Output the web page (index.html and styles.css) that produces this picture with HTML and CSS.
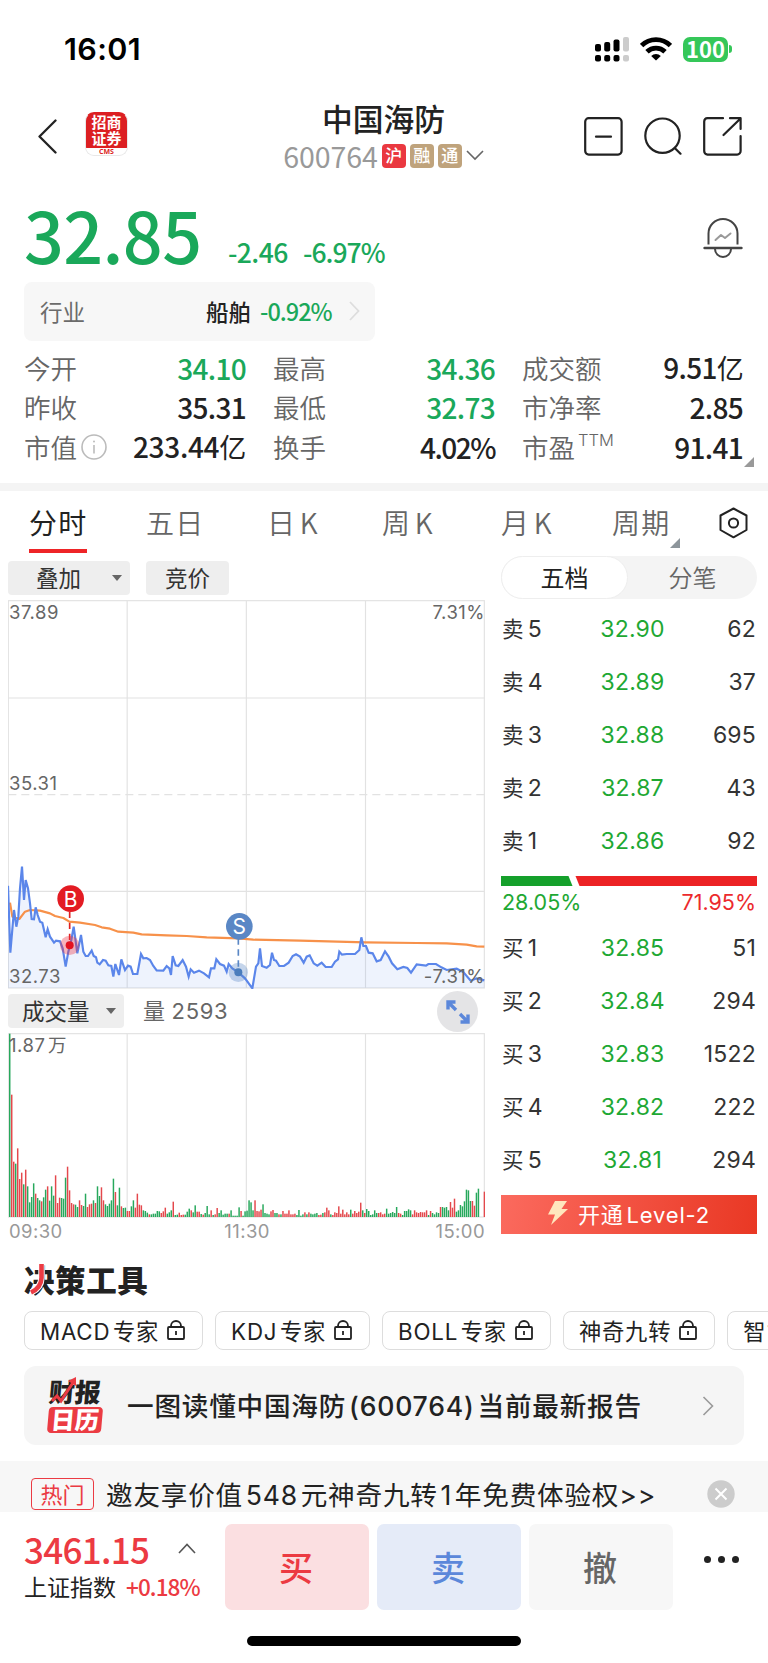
FILE: index.html
```
<!DOCTYPE html>
<html lang="zh-CN">
<head>
  <meta charset="UTF-8" />
  <meta name="viewport" content="width=device-width, initial-scale=1.0"/>
  <title>中国海防 600764</title>
  <link rel="stylesheet" href="styles.css">
</head>
<body>

  <div class="status-bar">
    <span class="clock">16:01</span>
    <div class="status-icons">
      <svg class="signal" width="34" height="25" viewBox="0 0 34 25">
        <g fill="#000">
          <rect x="0" y="7" width="6" height="7.5" rx="2"/>
          <rect x="9.2" y="5" width="6" height="9.5" rx="2"/>
          <rect x="18.5" y="2.5" width="6" height="12" rx="2"/>
          <rect x="0" y="18" width="6" height="6.5" rx="2"/>
          <rect x="9.2" y="18" width="6" height="6.5" rx="2"/>
          <rect x="18.5" y="18" width="6" height="6.5" rx="2"/>
        </g>
        <g fill="#ccc">
          <rect x="28" y="0" width="6" height="14.5" rx="2"/>
          <rect x="28" y="18" width="6" height="6.5" rx="2"/>
        </g>
      </svg>
      <svg class="wifi" width="32" height="24" viewBox="0 0 32 24" fill="none" stroke="#000" stroke-width="4.8">
        <path d="M1.6 8.6 A20.4 20.4 0 0 1 30.4 8.6"/>
        <path d="M7 14.8 A12.8 12.8 0 0 1 25 14.8"/>
        <path d="M16 23.5 L11.2 18.9 A6.8 6.8 0 0 1 20.8 18.9 Z" fill="#000" stroke="none"/>
      </svg>
      <span class="battery">100</span>
      <span class="battery-tip"></span>
    </div>
  </div>

  <header class="header">
    <svg class="back" width="19" height="35" viewBox="0 0 19 35" fill="none" stroke="#222" stroke-width="2.3" stroke-linecap="round" stroke-linejoin="round">
      <path d="M17.5 1.5 L1.5 17.5 L17.5 33.5"/>
    </svg>
    <div class="broker">
      <span>招商</span>
      <span>证券</span>
      <small>CMS</small>
    </div>
    <div class="stock">
      <h1>中国海防</h1>
      <div class="code-row">
        <span class="code">600764</span>
        <span class="badge badge-red">沪</span>
        <span class="badge">融</span>
        <span class="badge">通</span>
        <svg width="18" height="11" viewBox="0 0 18 11" fill="none" stroke="#666" stroke-width="1.6"><path d="M1 1 L9 9 L17 1"/></svg>
      </div>
    </div>
    <div class="tools">
      <svg width="39" height="39" viewBox="0 0 39 39" fill="none" stroke="#222" stroke-width="2.2" stroke-linecap="round">
        <rect x="1.2" y="1.2" width="36.4" height="36.4" rx="3.5"/><path d="M12 19.7 H27"/>
      </svg>
      <svg width="38" height="39" viewBox="0 0 38 39" fill="none" stroke="#222" stroke-width="2.2" stroke-linecap="round">
        <circle cx="18.5" cy="18.7" r="17.2"/><path d="M31 31.2 L36.5 36.7"/>
      </svg>
      <svg width="39" height="39" viewBox="0 0 39 39" fill="none" stroke="#222" stroke-width="2.2" stroke-linecap="round" stroke-linejoin="round">
        <path d="M20 1.2 H4.5 A3.5 3.5 0 0 0 1.2 4.5 V34 A3.5 3.5 0 0 0 4.5 37.6 H34 A3.5 3.5 0 0 0 37.6 34 V19"/>
        <path d="M27 1.2 H37.6 V12 M37 2 L20.5 18"/>
      </svg>
    </div>
  </header>

  <section class="quote">
    <div class="price-row">
      <span class="price">32.85</span>
      <span class="change">-2.46</span>
      <span class="percent">-6.97%</span>
      <svg class="bell" width="40" height="40" viewBox="0 0 40 40" fill="none" stroke="#444" stroke-width="2">
        <path d="M5.5 26.5 V15.5 A14.5 14.5 0 0 1 34.5 15.5 V26.5"/>
        <path d="M1.5 30 H38.5" stroke-width="2.4" stroke-linecap="round"/>
        <path d="M12 31 A8 8 0 0 0 28 31"/>
        <path d="M12.5 22 L18 17 L22 20 L27.5 15.5" stroke="#999" stroke-linecap="round" stroke-linejoin="round"/>
      </svg>
    </div>

    <div class="industry">
      <span class="industry-label">行业</span>
      <span class="industry-name">船舶</span>
      <span class="industry-pct">-0.92%</span>
      <svg width="11" height="20" viewBox="0 0 11 20" fill="none" stroke="#ddd" stroke-width="1.8"><path d="M1 1 L9.5 10 L1 19"/></svg>
    </div>

    <div class="stats">
      <div class="stat"><span>今开</span><b class="down">34.10</b></div>
      <div class="stat"><span>最高</span><b class="down">34.36</b></div>
      <div class="stat"><span>成交额</span><b>9.51<i>亿</i></b></div>
      <div class="stat"><span>昨收</span><b>35.31</b></div>
      <div class="stat"><span>最低</span><b class="down">32.73</b></div>
      <div class="stat"><span>市净率</span><b>2.85</b></div>
      <div class="stat">
        <span>市值</span>
        <svg class="info" width="26" height="26" viewBox="0 0 26 26" fill="none" stroke="#bbb" stroke-width="1.6">
          <circle cx="13" cy="13" r="12"/><path d="M13 11 V19.5"/><circle cx="13" cy="7.5" r="1" fill="#bbb" stroke="none"/>
        </svg>
        <b class="wide">233.44<i>亿</i></b>
      </div>
      <div class="stat"><span>换手</span><b class="narrow">4.02%</b></div>
      <div class="stat"><span>市盈<sup>TTM</sup></span><b>91.41</b></div>
      <span class="corner"></span>
    </div>
  </section>

  <nav class="tabs">
    <span class="tab active">分时</span>
    <span class="tab">五日</span>
    <span class="tab">日 K</span>
    <span class="tab">周 K</span>
    <span class="tab">月 K</span>
    <span class="tab more">周期</span>
    <svg width="29" height="32" viewBox="0 0 29 32" fill="none" stroke="#222" stroke-width="2" stroke-linejoin="round">
      <path d="M14.5 1.5 L27.5 8.5 V23 L14.5 30.3 L1.5 23 V8.5 Z"/><circle cx="14.5" cy="16" r="4.6"/>
    </svg>
  </nav>

  <main class="market">
    <div class="charts">
      <div class="chart-buttons">
        <span class="gray-button overlay">叠加<i class="arrow"></i></span>
        <span class="gray-button auction">竞价</span>
      </div>

      <div class="price-chart">
        <svg id="priceSvg" width="477" height="389" viewBox="24 -660 1431 1167">
          <g stroke="#e2e2e2" stroke-width="3.5" fill="none">
            <rect x="25" y="-658" width="1428" height="1162"/>
            <path d="M381.5 -658 V504 M739 -658 V504 M1096.5 -658 V504 M25 -366 H1453 M25 214 H1453"/>
            <path d="M25 -76 H1453" stroke-dasharray="24 15"/>
          </g>
          <polygon id="area" fill="#5b86ea" fill-opacity=".1"/>
          <polyline id="average" fill="none" stroke="#f7914a" stroke-width="6.5" stroke-linejoin="round"/>
          <polyline id="line" fill="none" stroke="#5b86ea" stroke-width="6.5"/>
          <g stroke-width="5" stroke-dasharray="19 14">
            <path d="M209 275 V375" stroke="#e02020"/>
            <path d="M715 355 V457" stroke="#5a87c5"/>
          </g>
          <circle cx="209" cy="376" r="29" fill="#ec2b3c" fill-opacity=".35"/>
          <circle cx="209" cy="376" r="12" fill="#e3121f"/>
          <circle cx="715" cy="457" r="29" fill="#5a87c5" fill-opacity=".35"/>
          <circle cx="715" cy="457" r="12" fill="#4a7dbc"/>
          <circle cx="212" cy="236" r="40" fill="#e31b23"/>
          <circle cx="718" cy="319" r="40" fill="#5a87c5"/>
          <text x="212" y="260" class="mark">B</text>
          <text x="718" y="342" class="mark">S</text>
        </svg>
        <span class="axis top left">37.89</span>
        <span class="axis top right">7.31%</span>
        <span class="axis middle left">35.31</span>
        <span class="axis bottom left">32.73</span>
        <span class="axis bottom right">-7.31%</span>
      </div>

      <div class="volume-head">
        <span class="gray-button volume-button">成交量<i class="arrow"></i></span>
        <span class="volume-now">量 2593</span>
        <span class="expand">
          <svg width="24" height="24" viewBox="0 0 24 24" fill="none" stroke="#5b87da" stroke-width="3.4">
            <path d="M9.5 2 H2 V9.5 M2 2 L10 10 M14 14 L22 22 M22 14.5 V22 H14.5"/>
          </svg>
        </span>
      </div>

      <div class="volume-chart">
        <svg width="477" height="185" viewBox="24 39 1431 555">
          <g stroke="#e2e2e2" stroke-width="3.5" fill="none">
            <rect x="25" y="41" width="1428" height="550"/>
            <path d="M381.5 41 V591 M739 41 V591 M1096.5 41 V591"/>
          </g>
          <g id="bars"></g>
        </svg>
        <span class="axis top left">1.87 万</span>
      </div>

      <div class="times">
        <span>09:30</span><span>11:30</span><span>15:00</span>
      </div>
    </div>

    <aside class="book">
      <div class="switch">
        <span class="on">五档</span>
        <span>分笔</span>
      </div>
      <div id="sell"></div>
      <svg class="ratio" width="256" height="10" viewBox="0 0 256 10">
        <path d="M0 0 H67.5 L71.5 10 H0 Z" fill="#15a02b"/>
        <path d="M74.5 0 H256 V10 H78.5 Z" fill="#ec2224"/>
      </svg>
      <div class="ratio-text"><span>28.05%</span><span>71.95%</span></div>
      <div id="buy"></div>
      <div class="level2">
        <svg width="20" height="24" viewBox="0 0 20 24"><path d="M7 0 H19 L13.5 8 H20 L3 24 L7 13.5 H0 Z" fill="#ffe7bd"/></svg>
        <span>开通 Level-2</span>
      </div>
    </aside>
  </main>

  <section class="decision">
    <h2>决策工具
      <svg width="16" height="31" viewBox="0 0 16 31" fill="none">
        <path d="M12.5 0 V14 Q12 24 2 28.5" stroke="#fff" stroke-width="6.4"/>
        <path d="M12.5 0 V14 Q12 24 2 28.5" stroke="#eb3b43" stroke-width="4.6"/>
      </svg>
    </h2>
    <div class="chips" id="chips"></div>
    <div class="report">
      <div class="report-logo">
        <span class="logo-top">财报</span>
        <span class="logo-bottom">日历</span>
        <svg width="28" height="28" viewBox="0 0 28 28" fill="none" stroke="#eb3b43" stroke-width="3"><path d="M1 24 L6 19 L10 24 L23 4"/><path d="M17 4 L25 0 L25 9 Z" fill="#eb3b43" stroke="none"/></svg>
      </div>
      <span class="report-text">一图读懂中国海防 (600764) 当前最新报告</span>
      <svg width="12" height="20" viewBox="0 0 12 20" fill="none" stroke="#999" stroke-width="1.6"><path d="M1.5 1 L10.5 10 L1.5 19"/></svg>
    </div>
  </section>

  <div class="promo">
    <span class="hot">热门</span>
    <span class="promo-text">邀友享价值 548 元神奇九转 1 年免费体验权&gt;&gt;</span>
    <svg width="28" height="28" viewBox="0 0 28 28"><circle cx="14" cy="14" r="13.7" fill="#ccc"/><path d="M8.5 8.5 L19.5 19.5 M19.5 8.5 L8.5 19.5" stroke="#fff" stroke-width="2"/></svg>
  </div>

  <footer class="trade">
    <div class="index">
      <div class="index-top">
        <span class="index-value">3461.15</span>
        <svg width="18" height="11" viewBox="0 0 18 11" fill="none" stroke="#555" stroke-width="1.6"><path d="M1 10 L9 1.5 L17 10"/></svg>
      </div>
      <div class="index-bottom"><span>上证指数</span><span class="index-pct">+0.18%</span></div>
    </div>
    <span class="action buy">买</span>
    <span class="action sell">卖</span>
    <span class="action cancel">撤</span>
    <span class="dots"><i></i><i></i><i></i></span>
  </footer>
  <div class="home-bar"></div>

  <script src="script.js"></script>
</body>
</html>
```
FILE: styles.css
```
* {
  box-sizing: border-box;
}

body {
  margin: 0;
  width: 768px;
  height: 1663px;
  overflow: hidden;
  background: #fff;
  color: #222;
  font-family: Inter, "Noto Sans CJK SC", sans-serif;
}

i,
em {
  font-style: normal;
}

svg {
  flex: none;
  display: block;
}

/* status bar */
.status-bar {
  height: 98px;
  padding: 0 36px 0 64px;
  display: flex;
  align-items: center;
  justify-content: space-between;
}

.clock {
  margin-top: -2px;
  font-size: 30.5px;
  font-weight: 600;
  letter-spacing: 0.4px;
  color: #000;
}

.status-icons {
  display: flex;
  align-items: center;
}

.signal {
  margin-right: 11px;
}

.wifi {
  margin-right: 11px;
}

.battery {
  width: 45px;
  height: 25px;
  border-radius: 7px;
  background: #35c759;
  color: #fff;
  font: 700 22px/22px "Noto Sans CJK SC", sans-serif;
  text-align: center;
}

.battery-tip {
  width: 3px;
  height: 8px;
  margin-left: 1px;
  border-radius: 0 4px 4px 0;
  background: #35c759;
}

/* header */
.header {
  height: 76px;
  padding: 0 26px 0 38px;
  display: flex;
  align-items: center;
}

.broker {
  width: 43px;
  height: 44px;
  margin: -4px 0 0 28px;
  padding-top: 1px;
  border-radius: 9px;
  border: 1px solid #e8e8e8;
  border-top-color: #dc1f22;
  background: linear-gradient(#dc1f22 35px, #fff 35px);
  color: #fff;
  display: flex;
  flex-direction: column;
  align-items: center;
  font: 700 15px/16px "Noto Sans CJK SC", sans-serif;
}

.broker small {
  margin-top: 2px;
  font: 700 7px/7px "Open Sans", sans-serif;
  color: #dc1f22;
}

.stock {
  flex: 1;
  padding-left: 55px;
  display: flex;
  flex-direction: column;
  align-items: center;
}

.stock h1 {
  margin: 0;
  font: 500 30.8px/37px "Noto Sans CJK SC", sans-serif;
}

.code-row {
  height: 37px;
  padding-top: 2px;
  display: flex;
  align-items: center;
  gap: 4px;
}

.code {
  font: 400 28.5px/34px "Noto Sans CJK SC", sans-serif;
  letter-spacing: -0.1px;
  color: #999;
}

.badge {
  width: 24px;
  height: 24px;
  border-radius: 4px;
  background: #bfa37c;
  color: #fff;
  font: 500 17px/22px "Noto Sans CJK SC", sans-serif;
  text-align: center;
}

.badge-red {
  background: #ea3840;
}

.tools {
  display: flex;
  gap: 21px;
}

/* quote */
.quote {
  height: 309px;
  padding: 0 24px;
}

.price-row {
  height: 108px;
  padding-top: 25px;
  display: flex;
  align-items: baseline;
  color: #1aa85a;
  font-family: "Noto Sans CJK SC", sans-serif;
}

.price {
  width: 204px;
  font-size: 70px;
  line-height: 70px;
  font-weight: 500;
  letter-spacing: -0.6px;
}

.change,
.percent {
  position: relative;
  top: -1px;
  width: 75px;
  font-size: 26.5px;
  line-height: 30px;
  font-weight: 500;
  letter-spacing: -0.6px;
}

.percent {
  letter-spacing: -1px;
}

.bell {
  margin-left: auto;
  margin-right: 1px;
  align-self: flex-start;
  margin-top: 19px;
}

.industry {
  width: 351px;
  height: 59px;
  padding: 0 15px 2px 16px;
  border-radius: 8px;
  background: #f7f7f7;
  display: flex;
  align-items: center;
  font: 400 22.5px/54px "Noto Sans CJK SC", sans-serif;
}

.industry-label {
  flex: 1;
  color: #6b6b6b;
}

.industry-name {
  font-weight: 500;
  margin-right: 9px;
}

.industry-pct {
  width: 71px;
  margin-right: 18px;
  font-size: 23.5px;
  font-weight: 500;
  letter-spacing: -1px;
  color: #1aa85a;
}

.stats {
  position: relative;
  margin-top: 7px;
  display: grid;
  grid-template-columns: 223px 223px 222px;
  column-gap: 26px;
  grid-auto-rows: 39.5px;
}

.stat {
  display: flex;
  align-items: center;
  font: 350 26.5px/36px "Noto Sans CJK SC", sans-serif;
  color: #666;
}

.stat b {
  margin-left: auto;
  margin-right: 1px;
  font-weight: 500;
  font-size: 28px;
  letter-spacing: -0.7px;
  color: #222;
}

.stat b.wide {
  letter-spacing: -0.3px;
}

.stat b.narrow {
  letter-spacing: -1.5px;
}

.stat b i {
  font-weight: 400;
  font-size: 27px;
}

.stat .down {
  color: #1aa85a;
}

.stat sup {
  margin-left: 3px;
  font: 300 16.5px/0 Inter, sans-serif;
  vertical-align: 12px;
}

.info {
  margin-left: 4px;
}

.corner {
  position: absolute;
  right: -10px;
  bottom: 0;
  border: 5px solid transparent;
  border-right-color: #999;
  border-bottom-color: #999;
}

/* chart tabs */
.tabs {
  height: 78px;
  border-top: 8px solid #f4f4f4;
  padding-left: 29px;
  display: grid;
  grid-template-columns: 117px 121px 115px 119px 111px 107px 29px;
  align-items: center;
  justify-items: start;
  font: 350 28px/63px "Noto Sans CJK SC", sans-serif;
  letter-spacing: 1.2px;
  word-spacing: -4px;
  color: #666;
}

.tabs svg {
  margin-bottom: 6px;
}

.tab {
  position: relative;
  height: 70px;
}

.tab.active {
  color: #222;
  font-weight: 400;
  border-bottom: 4px solid #ee2427;
  height: 62px;
  margin-bottom: 8px;
}

.tab.more::after {
  content: "";
  position: absolute;
  right: -10px;
  bottom: 13px;
  border: 5px solid transparent;
  border-right-color: #8d959b;
  border-bottom-color: #8d959b;
}

/* market */
.market {
  height: 696px;
  padding: 0 11px 0 8px;
  display: flex;
  justify-content: space-between;
}

.charts {
  width: 477px;
}

.chart-buttons {
  height: 39px;
  display: flex;
  gap: 16px;
}

.gray-button {
  height: 34px;
  border-radius: 4px;
  background: #eee;
  display: flex;
  align-items: center;
  padding-bottom: 2px;
  font: 400 22.5px/30px "Noto Sans CJK SC", sans-serif;
  color: #333;
}

.overlay {
  width: 122px;
  padding-left: 28px;
}

.auction {
  width: 83px;
  justify-content: center;
}

.arrow {
  margin-left: auto;
  margin-right: 8px;
  margin-top: 2px;
  border: 5px solid transparent;
  border-top: 6px solid #666;
  border-bottom: 0;
}

.price-chart,
.volume-chart {
  position: relative;
}

.mark {
  font-family: Inter, sans-serif;
  font-size: 63px;
  fill: #fff;
  text-anchor: middle;
}

.axis {
  position: absolute;
  font-size: 18.5px;
  line-height: 22px;
  letter-spacing: 0.5px;
  word-spacing: -3px;
  color: #666;
}

.axis.left { left: 1px; }
.axis.right { right: 0; }
.axis.top { top: 1px; }
.axis.middle { top: 172px; }
.axis.bottom { top: 365px; }

.volume-head {
  height: 44px;
  padding-top: 5px;
  display: flex;
  align-items: flex-start;
}

.volume-button {
  width: 116px;
  padding-left: 14px;
}

.volume-now {
  margin-left: 19px;
  font-size: 22px;
  line-height: 34px;
  letter-spacing: 0.7px;
  word-spacing: -1px;
  color: #666;
}

.expand {
  width: 41px;
  height: 41px;
  margin: -3px 7px 0 auto;
  border-radius: 50%;
  background: #e4e4e6;
  display: flex;
  align-items: center;
  justify-content: center;
}

.times {
  display: flex;
  justify-content: space-between;
  padding-left: 1px;
  font-size: 18.5px;
  line-height: 26px;
  letter-spacing: 0.4px;
  color: #999;
}

.times span:nth-child(2) {
  margin-right: 4px;
}

/* order book */
.book {
  width: 256px;
  margin-top: -5px;
}

.switch {
  height: 43px;
  margin-bottom: 4px;
  border-radius: 22px;
  background: #f4f4f4;
  display: flex;
  font: 350 24px/41px "Noto Sans CJK SC", sans-serif;
  color: #666;
}

.switch span {
  flex: 1;
  text-align: center;
}

.switch .on {
  flex: 0 0 127px;
  border: 1px solid #eee;
  border-radius: 22px;
  background: #fff;
  color: #222;
  font-weight: 400;
  line-height: 39px;
}

.book-row {
  height: 52.8px;
  display: grid;
  grid-template-columns: 70px 1fr 70px;
  align-items: center;
  font-size: 23px;
  letter-spacing: 0.2px;
  color: #333;
}

.book-row span:nth-child(1) {
  display: flex;
  align-items: center;
  gap: 4px;
  padding-left: 1px;
}

.book-row em {
  font: 400 21.5px/28px "Noto Sans CJK SC", sans-serif;
  margin-top: -2px;
}

.book-row span:nth-child(2) {
  text-align: center;
  padding-left: 7px;
  color: #1ea833;
}

.book-row span:last-child {
  margin-right: 1px;
  text-align: right;
}

.ratio {
  margin-top: 9px;
}

.ratio-text {
  height: 36px;
  padding: 0 1px;
  display: flex;
  justify-content: space-between;
  font-size: 21.5px;
  line-height: 32px;
  color: #1ea833;
}

.ratio-text span:last-child {
  color: #ec2a2d;
}

.level2 {
  height: 39px;
  margin-top: 9px;
  padding-bottom: 2px;
  background: linear-gradient(100deg, #fb6a5e, #e93824);
  color: #fff;
  display: flex;
  align-items: center;
  justify-content: center;
  gap: 10px;
  font-size: 22px;
  letter-spacing: 0.8px;
  word-spacing: -4px;
}

/* decision tools */
.decision {
  height: 204px;
  padding-left: 24px;
}

.decision h2 {
  position: relative;
  margin: 0;
  height: 54px;
  font: 900 30.5px/44px "Noto Sans CJK SC", sans-serif;
  letter-spacing: 0.6px;
}

.decision h2 svg {
  position: absolute;
  left: 5px;
  top: 7px;
}

.chips {
  display: flex;
  gap: 12px;
  overflow: hidden;
}

.chip {
  flex: none;
  height: 39px;
  padding: 0 17px 2px 15px;
  border: 1px solid #ddd;
  border-radius: 8px;
  display: flex;
  align-items: center;
  gap: 8px;
  font-size: 22.3px;
  letter-spacing: 0.8px;
  word-spacing: -4.5px;
  white-space: nowrap;
}

.report {
  width: 720px;
  height: 79px;
  margin-top: 16px;
  padding: 0 30px 0 24px;
  border-radius: 12px;
  background: #f5f5f5;
  display: flex;
  align-items: center;
}

.report-logo {
  position: relative;
  width: 54px;
  height: 56px;
  display: flex;
  flex-direction: column;
  font: 900 26px/28px "Noto Sans CJK SC", sans-serif;
  text-align: center;
}

.logo-top,
.logo-bottom {
  transform: skewX(-5deg);
}

.logo-top {
  line-height: 26px;
}

.logo-bottom {
  margin-top: 3px;
  height: 26px;
  line-height: 23px;
  font-size: 24px;
  border-radius: 4px;
  background: #eb3b43;
  color: #fff;
}

.report-logo svg {
  position: absolute;
  left: 3px;
  top: -1px;
}

.report-text {
  flex: 1;
  margin-left: 25px;
  padding-bottom: 2px;
  font-size: 26.6px;
  font-weight: 500;
  letter-spacing: 0.8px;
  word-spacing: -5px;
  white-space: nowrap;
}

/* promo */
.promo {
  height: 51px;
  padding: 15px 33px 0 31px;
  background: #f7f7f7;
  display: flex;
  align-items: center;
}

.hot {
  width: 63px;
  height: 32px;
  border: 1px solid #eb3b43;
  border-radius: 4px;
  color: #eb3b43;
  font: 400 22px/28px "Noto Sans CJK SC", sans-serif;
  text-align: center;
}

.promo-text {
  flex: 1;
  margin-left: 12px;
  padding-bottom: 2px;
  font-size: 26.6px;
  letter-spacing: 0.8px;
  word-spacing: -5.5px;
  white-space: nowrap;
}

/* trade bar */
.trade {
  height: 124px;
  padding: 12px 29px 0 24px;
  display: flex;
  align-items: flex-start;
  gap: 8px;
}

.index {
  width: 193px;
  font-family: "Noto Sans CJK SC", sans-serif;
}

.index-top {
  height: 49px;
  display: flex;
  align-items: center;
}

.index-value {
  width: 154px;
  font-size: 35px;
  line-height: 42px;
  font-weight: 500;
  letter-spacing: -0.7px;
  color: #ec3a42;
}

.index-bottom {
  display: flex;
  gap: 10px;
  font-size: 23px;
  line-height: 26px;
}

.index-pct {
  font-size: 22.5px;
  font-weight: 500;
  letter-spacing: -0.9px;
  color: #ec3a42;
}

.action {
  width: 144px;
  height: 86px;
  padding-right: 2px;
  border-radius: 7px;
  font: 500 34px/85px "Noto Sans CJK SC", sans-serif;
  text-align: center;
}

.action.buy {
  background: #fbdfe1;
  color: #ec3a42;
}

.action.sell {
  background: #e5ebf8;
  color: #5b87da;
}

.action.cancel {
  background: #f7f7f7;
  color: #666;
}

.dots {
  margin: 32px 0 0 auto;
  display: flex;
  gap: 7px;
}

.dots i {
  width: 7px;
  height: 7px;
  border-radius: 50%;
  background: #222;
}

.home-bar {
  width: 274px;
  height: 10px;
  margin: 0 auto;
  border-radius: 5px;
  background: #000;
}
```
FILE: script.js
```
const pricePoints = "24,197 31,398 42,270 49,320 55,290 60,205 66,140 72,240 77,180 84,205 90,250 95,297 102,298 107,262 113,285 120,305 127,308 137,352 143,328 150,350 162,368 168,362 180,364 188,385 197,440 205,395 214,360 221,320 232,400 243,345 250,395 257,408 264,408 275,392 281,408 288,412 292,428 299,433 309,420 317,422 325,436 334,438 340,470 346,432 357,465 364,418 375,450 384,437 392,440 399,462 412,462 423,402 430,415 440,414 450,420 460,438 470,451 490,452 500,438 508,445 513,465 518,408 527,436 535,438 548,420 558,440 566,470 572,448 582,458 597,452 612,460 627,472 633,445 643,445 649,418 660,432 672,437 680,455 686,432 697,445 715,457 735,475 757,505 768,440 775,430 780,385 786,438 800,443 810,435 816,398 822,420 828,422 838,438 852,438 866,428 878,408 888,403 900,410 911,428 920,410 929,406 941,430 952,437 965,428 977,441 995,441 1005,425 1014,418 1018,395 1026,404 1040,402 1065,402 1078,390 1084,352 1090,378 1098,378 1106,398 1118,400 1130,424 1142,420 1155,394 1166,410 1176,430 1192,448 1210,441 1222,444 1233,458 1250,433 1278,437 1285,432 1308,432 1324,442 1340,450 1370,446 1390,456 1412,482 1430,475 1453,481";
const averagePoints = "30,248 37,290 58,297 75,275 90,270 120,272 150,280 165,288 190,294 208,305 240,308 285,315 305,322 330,326 355,335 400,338 425,343 500,346 560,348 620,352 715,355 760,359 900,362 1096,367 1250,369 1340,370 1400,374 1430,379 1453,380";

document.getElementById("line").setAttribute("points", pricePoints);
document.getElementById("average").setAttribute("points", averagePoints);
document.getElementById("area").setAttribute("points", pricePoints + " 1453,504 24,504");

// one bar a minute, g = down, r = up
const volumes = "g550 r367 r166 g160 r206 r114 r133 g98 r142 g92 g44 g60 g101 r70 g57 g50 r47 g59 g82 r92 g49 g92 g64 r125 r42 r58 g57 g55 g118 r151 r80 r42 r38 g37 g30 r50 r36 g33 g70 r30 r38 r40 g50 r42 g92 g63 r89 r50 g38 g33 g40 g50 g115 r75 g35 g88 r32 g27 g28 r18 r18 g32 g50 r28 r70 r37 r35 g20 g18 g13 r8 g8 g10 g10 g18 g17 r12 r17 r28 g10 g14 g20 r46 g6 g7 r13 r6 r7 g7 g16 g25 r20 g14 g35 r16 r16 g9 r7 g12 g33 g8 r20 g6 r8 r27 g12 g20 g7 g10 g10 r10 g20 g4 g4 g4 g29 r18 g4 g17 g19 g50 g44 g20 r50 r18 r17 r22 g38 g12 g10 g8 r17 r21 g12 g12 r8 g8 r18 r10 r10 r20 r8 r8 r10 g6 g21 g4 g8 r14 g8 r14 g10 g8 g10 g12 r6 r7 g12 r14 r28 r20 g8 r6 r14 r12 r32 r10 r22 r8 r14 r8 g22 r10 r18 r12 r16 r43 g20 r12 g24 g18 g6 g8 g20 g12 r12 r14 r8 r10 g25 g10 g12 g15 g12 g30 r12 r10 g6 g18 g18 g23 g20 r8 r20 r14 r12 r15 r14 r14 r20 g6 r18 g12 g8 g14 g12 r30 g30 g28 g30 g20 r45 r28 r55 g16 g20 g36 g32 g47 g82 g80 g48 r48 r34 g73 g85 g0 g0 r76".split(" ");
const step = 1424 / (volumes.length - 1);
document.getElementById("bars").innerHTML = volumes.map((v, i) => {
  const h = Number(v.slice(1));
  const color = v[0] === "g" ? "#27a85c" : "#e4484c";
  return `<rect x="${(27 + i * step).toFixed(1)}" y="${591 - h}" width="4.4" height="${h}" fill="${color}"/>`;
}).join("");

function showRows(id, side, rows) {
  document.getElementById(id).innerHTML = rows.map(r =>
    `<div class="book-row"><span><em>${side}</em>${r[0]}</span><span>${r[1]}</span><span>${r[2]}</span></div>`
  ).join("");
}

showRows("sell", "卖", [
  [5, "32.90", 62],
  [4, "32.89", 37],
  [3, "32.88", 695],
  [2, "32.87", 43],
  [1, "32.86", 92]
]);
showRows("buy", "买", [
  [1, "32.85", 51],
  [2, "32.84", 294],
  [3, "32.83", 1522],
  [4, "32.82", 222],
  [5, "32.81", 294]
]);

const lock = `<svg width="18" height="20" viewBox="0 0 18 20" fill="none" stroke="#222" stroke-width="1.8"><rect x="1" y="7" width="16" height="12" rx="1"/><path d="M4 7 V6 A5 5 0 0 1 14 6 V7 M9 11 V15"/></svg>`;
document.getElementById("chips").innerHTML = ["MACD 专家", "KDJ 专家", "BOLL 专家", "神奇九转", "智能选股"]
  .map(name => `<span class="chip">${name}${lock}</span>`).join("");
```
